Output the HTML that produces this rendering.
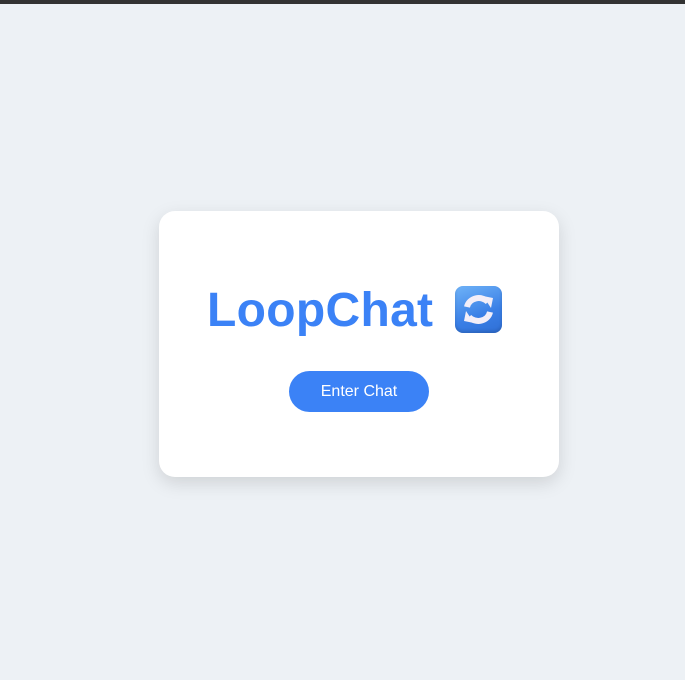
<!DOCTYPE html>
<html><head><style>
html,body{margin:0;padding:0}
body{width:685px;height:680px;background:#edf1f5;position:relative;overflow:hidden;font-family:"Liberation Sans",Arial,sans-serif}
.top{position:absolute;left:0;top:0;width:685px;height:4px;background:#333}
.card{position:absolute;left:159px;top:211px;width:400px;height:266px;background:#fff;border-radius:16px;box-shadow:0 6px 18px rgba(0,0,0,0.13)}
.title{position:absolute;left:207px;top:283px;font-size:48px;font-weight:bold;color:#3b82f6;line-height:56px;white-space:nowrap;letter-spacing:0.3px}
.emo{position:absolute;left:455px;top:286px;width:47px;height:47px;border-radius:8px;background:linear-gradient(160deg,#6fb3f8,#3a7fe6 60%,#2f6fd6);box-shadow:inset 0 -2px 3px rgba(0,0,0,0.15)}
.btn{position:absolute;left:289px;top:371px;width:140px;height:41px;border-radius:21px;background:#3b82f6;color:#fff;font-size:16px;text-align:center;line-height:41px}
</style></head><body>
<div class="top"></div>
<div class="card"></div>
<div class="title">LoopChat</div>
<div class="emo"><svg width="47" height="47" viewBox="0 0 47 47">
<path d="M12 21 A12 11 0 0 1 33 16" fill="none" stroke="#f3eef8" stroke-width="6"/>
<path d="M28 10 L38 12 L36 22 Z" fill="#f3eef8"/>
<path d="M35 26 A12 11 0 0 1 14 31" fill="none" stroke="#f3eef8" stroke-width="6"/>
<path d="M19 37 L9 35 L11 25 Z" fill="#f3eef8"/>
</svg></div>
<div class="btn">Enter Chat</div>
</body></html>
